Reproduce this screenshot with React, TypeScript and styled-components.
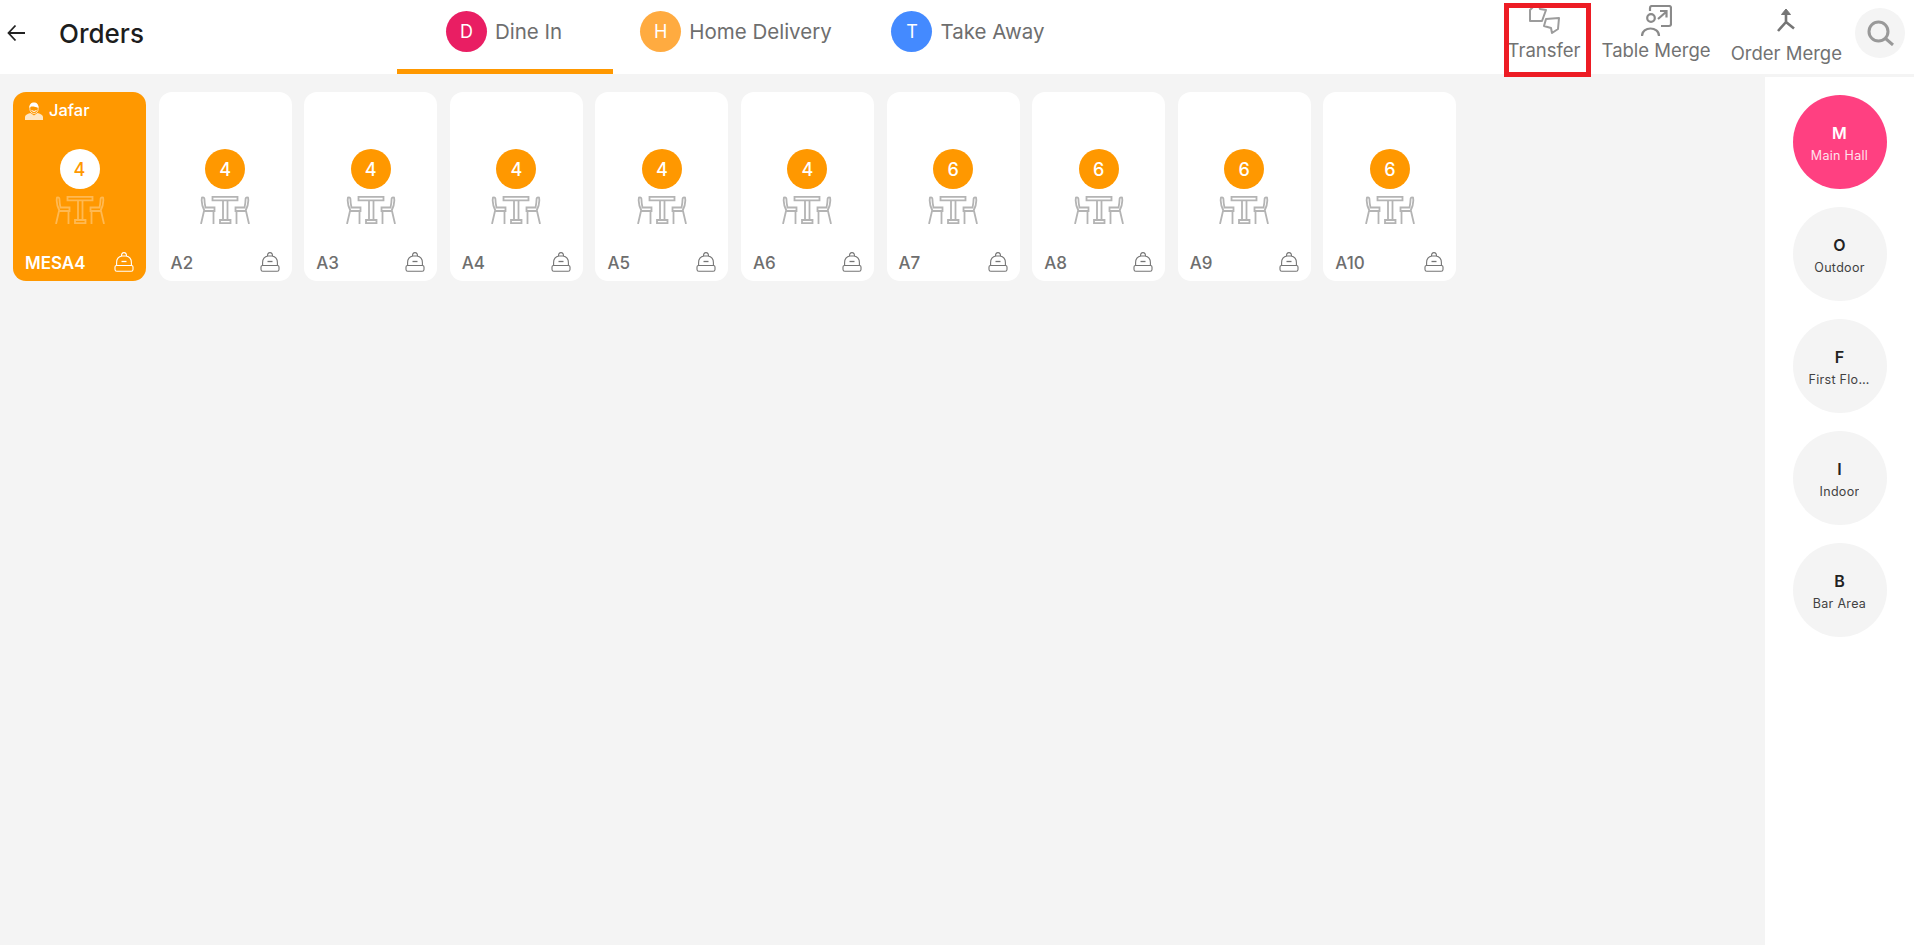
import React from 'react'
import styled, { createGlobalStyle } from 'styled-components'

const tabs = [
  { letter: 'D', label: 'Dine In', color: '#e91e63', active: true },
  { letter: 'H', label: 'Home Delivery', color: '#ffab40', active: false },
  { letter: 'T', label: 'Take Away', color: '#448aff', active: false },
]

const tables = [
  { name: 'MESA4', seats: 4, waiter: 'Jafar' },
  { name: 'A2', seats: 4 },
  { name: 'A3', seats: 4 },
  { name: 'A4', seats: 4 },
  { name: 'A5', seats: 4 },
  { name: 'A6', seats: 4 },
  { name: 'A7', seats: 6 },
  { name: 'A8', seats: 6 },
  { name: 'A9', seats: 6 },
  { name: 'A10', seats: 6 },
]

const floors = [
  { letter: 'M', label: 'Main Hall', active: true },
  { letter: 'O', label: 'Outdoor', active: false },
  { letter: 'F', label: 'First Floor', active: false },
  { letter: 'I', label: 'Indoor', active: false },
  { letter: 'B', label: 'Bar Area', active: false },
]

function BackIcon() {
  return (
    <svg width="18" height="18" viewBox="0 0 18 18" fill="none" stroke="#222" strokeWidth="1.8">
      <path d="M18 9H1.500M8.500 1.500 1.500 9l7 7.500" />
    </svg>
  )
}

function TransferIcon() {
  return (
    <svg width="31" height="29" viewBox="0 0 31 29" fill="none" stroke="#9c9c9c" strokeWidth="2" strokeLinejoin="round">
      <path d="M1 5v11h12l4-11-6-1-1-3H5z" />
      <path d="M17 14l13-1-1 11-6 4-1-5-7-2z" />
    </svg>
  )
}

function TableMergeIcon() {
  return (
    <svg width="31" height="31" viewBox="0 0 31 31" fill="none" stroke="#8a8a8a" strokeWidth="2.200">
      <path d="M9 6V3q0-2 2-2h17q2 0 2 2v16q0 2-2 2H20" />
      <circle cx="10" cy="13" r="3.800" />
      <path d="M1 31c0-10 17-10 17 0" />
      <path d="M17 14l8-7M19 6h6.500v6.500" />
    </svg>
  )
}

function OrderMergeIcon() {
  return (
    <svg width="18" height="24" viewBox="0 0 18 24" fill="none" stroke="#757575" strokeWidth="2.600">
      <path d="M9 3v11L1 23M9 14l8 6.500" />
      <path d="M4.500 6.500 9 1l4.500 5.500z" fill="#757575" strokeWidth="1" />
    </svg>
  )
}

function SearchIcon() {
  return (
    <svg width="27" height="26" viewBox="0 0 27 26" fill="none" stroke="#999" strokeWidth="3">
      <circle cx="11.500" cy="11.500" r="9.500" />
      <path d="M18.500 18.500 26 25" />
    </svg>
  )
}

function WaiterIcon() {
  return (
    <svg width="18" height="18" viewBox="0 0 18 18">
      <path d="M4.800 6.500C4.500 3 6.500 1.500 9 1.500s4.500 1.500 4.200 5c0 3-1.800 5-4.200 5s-4.200-2-4.200-5z" fill="none" stroke="#ffe0b5" strokeWidth="1" />
      <path d="M4.500 6C5.500 4 8 4.200 9.500 4.800c1.300.4 2.800.2 3.800 1.200.6-3.500-1.600-5.500-4.300-5.500S4 2.500 4.500 6z" fill="#fff" />
      <path d="M0 18v-3c0-2 2-3 5.500-4L9 13.500l3.500-2.500c3.500 1 5.500 2 5.500 4v3z" fill="#ffe6c2" />
      <path d="M6.500 8.500q2.500 2 5 0" fill="none" stroke="#fff" strokeWidth="1" />
    </svg>
  )
}

function TableIcon({ active }: { active: boolean }) {
  return (
    <svg width="50" height="28" viewBox="0 0 50 28" fill="none" stroke={active ? 'rgba(255,255,255,0.32)' : '#b4b4b4'} strokeWidth="1.800">
      <path d="M12.500.900h25v3.400h-25zM23 4.300V24M27.500 4.300V24M20 24h10.500v3.100H20z" />
      <path d="M2 1.500C4 1 4.500 2 4.500 4c0 3 .5 5 1 7.500H14.500v3.500H4.500C3 12 1 6 2 1.500zM4 15 1 28M13.500 15v13" />
      <path d="M48 1.500C46 1 45.500 2 45.500 4c0 3-.5 5-1 7.500H35.500v3.500H45.500C47 12 49 6 48 1.500zM46 15 49 28M36.500 15v13" />
    </svg>
  )
}

function BellIcon({ active }: { active: boolean }) {
  return (
    <svg width="20" height="20" viewBox="0 0 20 20" fill="none" stroke={active ? '#fff' : '#757575'} strokeWidth="1.100">
      <path d="M2.600 13.500V10.500C2.600 7 5 4.500 8 4h4c3 .5 5.400 3 5.400 6.500v3" />
      <path d="M7.500 4C7.500 1.800 8.600.6 10 .6s2.500 1.200 2.500 3.400" />
      <path d="M1 15q0-1.500 1.500-1.500h15Q19 13.500 19 15v2.500q0 1.800-1.800 1.800H2.800Q1 19.300 1 17.500z" />
      <path d="M7.500 9.500h5" strokeWidth="1.300" />
    </svg>
  )
}

export default function App() {
  return (
    <>
      <GlobalStyle />
      <Page>
        <Header>
          <TitleArea>
            <BackIcon />
            <Title>Orders</Title>
          </TitleArea>
          <TabList>
            {tabs.map((tab) => (
              <Tab key={tab.letter} $active={tab.active}>
                <TabBadge $color={tab.color}>{tab.letter}</TabBadge>
                {tab.label}
              </Tab>
            ))}
          </TabList>
          <Actions>
            <Action $marked>
              <IconSlot>
                <TransferIcon />
              </IconSlot>
              Transfer
            </Action>
            <Action>
              <IconSlot>
                <TableMergeIcon />
              </IconSlot>
              Table Merge
            </Action>
            <Action $lower>
              <IconSlot>
                <OrderMergeIcon />
              </IconSlot>
              Order Merge
            </Action>
            <SearchButton>
              <SearchIcon />
            </SearchButton>
          </Actions>
        </Header>
        <Body>
          <TableGrid>
            {tables.map((table, index) => (
              <TableCard key={table.name} $active={index === 0}>
                <WaiterRow>
                  {table.waiter && (
                    <>
                      <WaiterIcon />
                      <WaiterName>{table.waiter}</WaiterName>
                    </>
                  )}
                </WaiterRow>
                <TableCenter>
                  <Seats $active={index === 0}>{table.seats}</Seats>
                  <TableIcon active={index === 0} />
                </TableCenter>
                <CardFooter>
                  <TableName $active={index === 0}>{table.name}</TableName>
                  <BellIcon active={index === 0} />
                </CardFooter>
              </TableCard>
            ))}
          </TableGrid>
          <FloorBar>
            {floors.map((floor) => (
              <Floor key={floor.letter} $active={floor.active}>
                <FloorLetter>{floor.letter}</FloorLetter>
                <FloorLabel>{floor.label}</FloorLabel>
              </Floor>
            ))}
          </FloorBar>
        </Body>
      </Page>
    </>
  )
}

const GlobalStyle = createGlobalStyle`
  html, body {
    margin: 0;
    height: 100%;
    background: #f4f4f4;
    font-family: Inter, "Liberation Sans", sans-serif;
  }
  #root {
    height: 100%;
  }
`

const Page = styled.div`
  display: flex;
  flex-direction: column;
  height: 945px;
  overflow: hidden;
`

const Header = styled.header`
  display: flex;
  height: 74px;
  background: #fff;
  flex-shrink: 0;
`

const TitleArea = styled.div`
  display: flex;
  align-items: center;
  gap: 34px;
  width: 390px;
  padding: 0 0 8px 7px;
`

const Title = styled.h1`
  margin: 0;
  font-size: 26px;
  font-weight: 500;
  color: #1d1d1d;
`

const TabList = styled.nav`
  display: flex;
  gap: 16px;
`

const Tab = styled.div<{ $active: boolean }>`
  display: flex;
  align-items: center;
  justify-content: center;
  gap: 8px;
  width: 216px;
  height: 74px;
  box-sizing: border-box;
  padding: 0 2px 6px 0;
  font-size: 20.5px;
  color: #6e6e6e;
  border-bottom: 5px solid ${(p) => (p.$active ? '#ff9800' : 'transparent')};
`

const TabBadge = styled.span<{ $color: string }>`
  display: flex;
  align-items: center;
  justify-content: center;
  width: 41px;
  height: 41px;
  border-radius: 50%;
  background: ${(p) => p.$color};
  color: #fff;
  font-size: 18px;
`

const Actions = styled.div`
  display: flex;
  align-items: flex-start;
  margin-left: auto;
  padding-right: 9px;
`

const Action = styled.div<{ $marked?: boolean; $lower?: boolean }>`
  position: relative;
  display: flex;
  flex-direction: column;
  align-items: center;
  margin: ${(p) => (p.$lower ? '8px 13px 0 20px' : '5px 0 0 21px')};
  font-size: 18.5px;
  line-height: 22px;
  color: #727272;

  ${(p) =>
    p.$marked &&
    `
    &::after {
      content: '';
      position: absolute;
      top: -2px;
      left: -4px;
      right: -10px;
      height: 74px;
      box-sizing: border-box;
      border: 5px solid #ed1c24;
    }
  `}
`

const IconSlot = styled.div`
  display: flex;
  justify-content: center;
  height: 34px;
`

const SearchButton = styled.div`
  display: flex;
  align-items: center;
  justify-content: center;
  width: 50px;
  height: 50px;
  margin-top: 8px;
  border-radius: 50%;
  background: #f4f4f4;
`

const Body = styled.main`
  display: flex;
  flex: 1;
  min-height: 0;
`

const TableGrid = styled.section`
  display: flex;
  flex: 1;
  flex-wrap: wrap;
  align-content: flex-start;
  gap: 12.6px;
  padding: 18px 13px;
`

const TableCard = styled.article<{ $active: boolean }>`
  display: grid;
  grid-template-rows: 18px 1fr 20px;
  width: 133px;
  height: 189px;
  box-sizing: border-box;
  padding: 10px 12px 9px;
  border-radius: 13px;
  background: ${(p) => (p.$active ? '#ff9800' : '#fff')};
`

const WaiterRow = styled.div`
  display: flex;
  align-items: center;
  gap: 6px;
`

const WaiterName = styled.span`
  padding-bottom: 2px;
  font-size: 16.5px;
  font-weight: 500;
  color: #fff;
`

const TableCenter = styled.div`
  display: flex;
  flex-direction: column;
  align-items: center;
  justify-content: center;
  gap: 7px;
  padding-top: 1px;
`

const Seats = styled.div<{ $active: boolean }>`
  display: flex;
  align-items: center;
  justify-content: center;
  width: 40px;
  height: 40px;
  border-radius: 50%;
  font-size: 18px;
  font-weight: 500;
  background: ${(p) => (p.$active ? '#fff' : '#ff9800')};
  color: ${(p) => (p.$active ? '#ff9800' : '#fff')};
`

const CardFooter = styled.div`
  display: flex;
  align-items: center;
  justify-content: space-between;
`

const TableName = styled.span<{ $active: boolean }>`
  padding-top: 2px;
  font-size: 17px;
  font-weight: ${(p) => (p.$active ? 600 : 500)};
  color: ${(p) => (p.$active ? '#fff' : '#6e6e6e')};
`

const FloorBar = styled.aside`
  display: flex;
  flex-direction: column;
  align-items: center;
  gap: 18px;
  width: 149px;
  margin-top: 3px;
  padding: 18px 0 0 0;
  box-sizing: border-box;
  background: #fff;
  flex-shrink: 0;
`

const Floor = styled.div<{ $active: boolean }>`
  display: flex;
  flex-direction: column;
  align-items: center;
  justify-content: center;
  gap: 5px;
  width: 94px;
  height: 94px;
  padding-top: 2px;
  box-sizing: border-box;
  border-radius: 50%;
  background: ${(p) => (p.$active ? '#ff4081' : '#f4f4f4')};
  color: ${(p) => (p.$active ? '#fff' : '#222')};
`

const FloorLetter = styled.div`
  font-size: 16px;
  font-weight: 600;
  line-height: 20px;
`

const FloorLabel = styled.div`
  max-width: 62px;
  overflow: hidden;
  white-space: nowrap;
  text-overflow: ellipsis;
  font-size: 12.5px;
  line-height: 16px;
  letter-spacing: 0.3px;
  opacity: 0.85;
`
